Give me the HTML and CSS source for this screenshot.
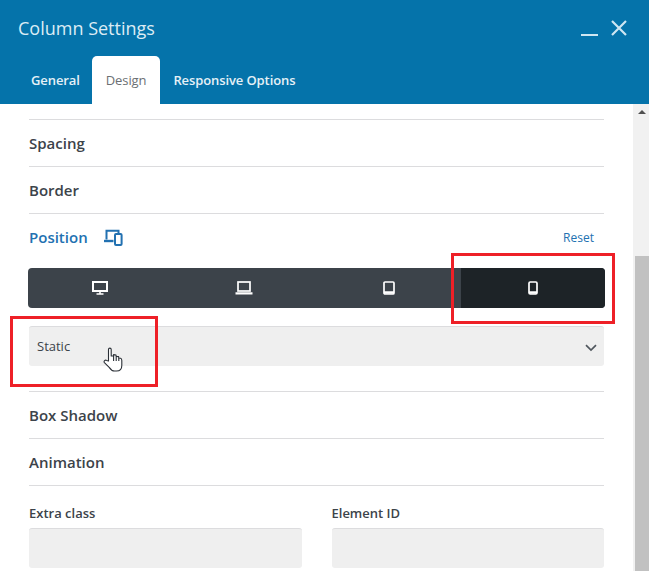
FILE: index.html
```html
<!DOCTYPE html>
<html lang="en">
<head>
  <meta charset="UTF-8">
  <meta name="viewport" content="width=device-width, initial-scale=1.0">
  <title>Column Settings</title>
  <link rel="stylesheet" href="styles.css">
</head>
<body>
  <div class="modal">
    <header class="modal-header">
      <div class="title-row">
        <div class="modal-title">Column Settings</div>
        <div class="window-btns">
          <span class="minimize"></span>
          <svg class="close" width="18" height="18" viewBox="0 0 18 18"><path d="M2 2 L16 16 M16 2 L2 16" stroke="#cfe6f2" stroke-width="2.2" fill="none"/></svg>
        </div>
      </div>
      <nav class="tabs">
        <a class="tab">General</a>
        <a class="tab active">Design</a>
        <a class="tab">Responsive Options</a>
      </nav>
    </header>
    <div class="modal-body">
      <main class="content">
        <div class="section">Spacing</div>
        <div class="section">Border</div>
        <div class="section section-open">
          <div class="position-head">
            <div class="position-title">
              <span>Position</span>
              <svg width="20" height="17" viewBox="0 0 20 17" fill="none" stroke="#2271b1" stroke-width="2">
                <path d="M3.5 10.5 V1.8 H15.5 V4"/>
                <path d="M1 12 H10.5" stroke-width="2.4"/>
                <rect x="12" y="5" width="6.6" height="11" rx="1"/>
              </svg>
            </div>
            <a class="reset">Reset</a>
          </div>
          <div class="device-bar">
            <div class="device">
              <svg width="16" height="14" viewBox="0 0 16 14" fill="none" stroke="#fff"><rect x="1" y="1" width="14" height="9" stroke-width="2"/><path d="M8 10 V12.5 M4.5 13 H11.5" stroke-width="1.6"/></svg>
            </div>
            <div class="device">
              <svg width="18" height="14" viewBox="0 0 18 14" fill="none" stroke="#fff"><rect x="3" y="1" width="12" height="9" stroke-width="1.7"/><path d="M0.5 12.3 H17.5" stroke-width="2.2"/></svg>
            </div>
            <div class="device">
              <svg width="12" height="14" viewBox="0 0 12 14" fill="none" stroke="#fff"><rect x="1" y="1" width="10" height="12" rx="1" stroke-width="1.7"/><path d="M1 11.5 H11" stroke-width="2.6"/></svg>
            </div>
            <div class="device device-active">
              <svg width="10" height="14" viewBox="0 0 10 14" fill="none" stroke="#fff"><rect x="1" y="1" width="8" height="12" rx="1.2" stroke-width="1.7"/><path d="M1 11.5 H9" stroke-width="2.6"/></svg>
            </div>
          </div>
          <div class="select">
            <span>Static</span>
            <svg class="chevron" width="12" height="8" viewBox="0 0 12 8" fill="none" stroke="#50575e" stroke-width="1.7"><path d="M1 1.2 L6 6 L11 1.2"/></svg>
          </div>
        </div>
        <div class="section">Box Shadow</div>
        <div class="section">Animation</div>
        <div class="fields">
          <div class="field">
            <label>Extra class</label>
            <div class="input"></div>
          </div>
          <div class="field">
            <label>Element ID</label>
            <div class="input"></div>
          </div>
        </div>
      </main>
      <div class="scrollbar">
        <div class="scroll-arrow"></div>
        <div class="scroll-thumb"></div>
      </div>
    </div>
  </div>

  <!-- annotations drawn on the screenshot -->
  <div class="mark mark-device"></div>
  <div class="mark mark-select"></div>
  <svg class="hand" width="20" height="25" viewBox="0 0 20 25" fill="#fff" stroke="#2a2f36" stroke-width="1.1" stroke-linejoin="round">
    <path d="M5.5 14 V2.5 C5.5 0.6 8.2 0.6 8.2 2.5 V9 L10.6 9 V7.6 L13 8 L13.2 9.4 L15.6 9.6 L15.8 11 L17.6 11.2 C18.6 11.5 18.8 12.5 18.8 13.5 V18.5 C18.8 21.8 16.8 24 13.5 24 H11.5 C9 24 7.8 22.8 6.4 20.6 L1.4 15.6 C0.4 14.2 2.2 12.4 3.6 13.4 Z"/>
    <path d="M10.6 9 V14 M13.2 9.4 V14 M15.8 11 V14" fill="none"/>
  </svg>
</body>
</html>
```

FILE: styles.css
```css
:root {
  --blue: #0573aa;
  --line: #dcdcde;
  --text: #3c434a;
  --link: #2271b1;
  --field: #efefef;
}
* { box-sizing: border-box; }
html, body { height: 100%; }
body {
  margin: 0;
  overflow: hidden;
  font-family: "Open Sans", "Noto Sans", Arial, sans-serif;
  color: var(--text);
  background: #fff;
}
.modal {
  height: 571px;
  display: flex;
  flex-direction: column;
}
.modal-header {
  background: var(--blue);
  color: #fff;
  height: 104px;
  flex: none;
}
.title-row {
  height: 56px;
  padding: 0 21px 0 18px;
  display: flex;
  justify-content: space-between;
}
.modal-title {
  font-size: 18px;
  line-height: 24px;
  margin-top: 16px;
  color: #dcecf5;
}
.window-btns {
  display: flex;
  align-items: flex-start;
  gap: 12px;
  margin-top: 19px;
}
.minimize {
  display: block;
  width: 17px;
  height: 2px;
  margin-top: 15px;
  background: #cfe6f2;
}
.tabs {
  display: flex;
  height: 48px;
  padding-left: 18px;
}
.tab {
  padding: 0 13px;
  line-height: 48px;
  font-size: 13px;
  font-weight: 600;
  letter-spacing: -0.1px;
  color: #e6f1f7;
}
.tab:first-child {
  padding-right: 12px;
}
.tab.active {
  padding: 0 14px;
  background: #fff;
  color: #6b6f73;
  font-weight: 400;
  border-radius: 5px 5px 0 0;
}
.modal-body {
  flex: 1;
  display: flex;
  min-height: 0;
}
.content {
  flex: 1;
  min-width: 0;
  padding: 15px 29px 0 29px;
  overflow: hidden;
}
.section {
  border-top: 1px solid var(--line);
  height: 47px;
  line-height: 47px;
  font-size: 15px;
  font-weight: 600;
}
.section-open {
  height: 178px;
}
.position-head {
  display: flex;
  justify-content: space-between;
  align-items: center;
  height: 47px;
}
.position-title {
  display: flex;
  align-items: center;
  gap: 15px;
  color: var(--link);
}
.reset {
  font-size: 12px;
  font-weight: 400;
  color: var(--link);
  margin-right: 10px;
}
.device-bar {
  display: flex;
  height: 40px;
  margin: 7px -1px 18px -1px;
  background: #3c434a;
  border-radius: 4px;
  overflow: hidden;
}
.device {
  flex: 1;
  display: flex;
  align-items: center;
  justify-content: center;
}
.device-active {
  flex: none;
  width: 144px;
  background: #1d2327;
}
.select {
  height: 40px;
  background: var(--field);
  border-top: 1px solid var(--line);
  border-radius: 3px;
  padding: 0 7px 0 8px;
  display: flex;
  align-items: center;
  justify-content: space-between;
  font-size: 13px;
  font-weight: 400;
}
.chevron {
  margin-top: 3px;
}
.section:nth-child(5) {
  border-bottom: 1px solid var(--line);
  height: 48px;
}
.fields {
  display: flex;
  gap: 30px;
  margin-top: 18px;
}
.field {
  flex: 1;
}
.field label {
  display: block;
  font-size: 13px;
  font-weight: 600;
  line-height: 18px;
  margin-bottom: 6px;
}
.input {
  height: 40px;
  background: var(--field);
  border-top: 1px solid var(--line);
  border-radius: 3px;
}
.scrollbar {
  flex: none;
  width: 16px;
  background: #f1f1f1;
  display: flex;
  flex-direction: column;
  padding-left: 2px;
}
.scroll-arrow {
  width: 0;
  height: 0;
  margin: 6px 0 0 3px;
  border-left: 4px solid transparent;
  border-right: 4px solid transparent;
  border-bottom: 4px solid #505050;
}
.scroll-thumb {
  flex: 1;
  margin-top: 142px;
  background: #c1c1c1;
}
.mark {
  position: absolute;
  border: 3px solid #ee2027;
}
.mark-device {
  left: 451px;
  top: 253px;
  width: 164px;
  height: 71px;
}
.mark-select {
  left: 10px;
  top: 316px;
  width: 148px;
  height: 71px;
}
.hand {
  position: absolute;
  left: 103px;
  top: 347px;
}
```
